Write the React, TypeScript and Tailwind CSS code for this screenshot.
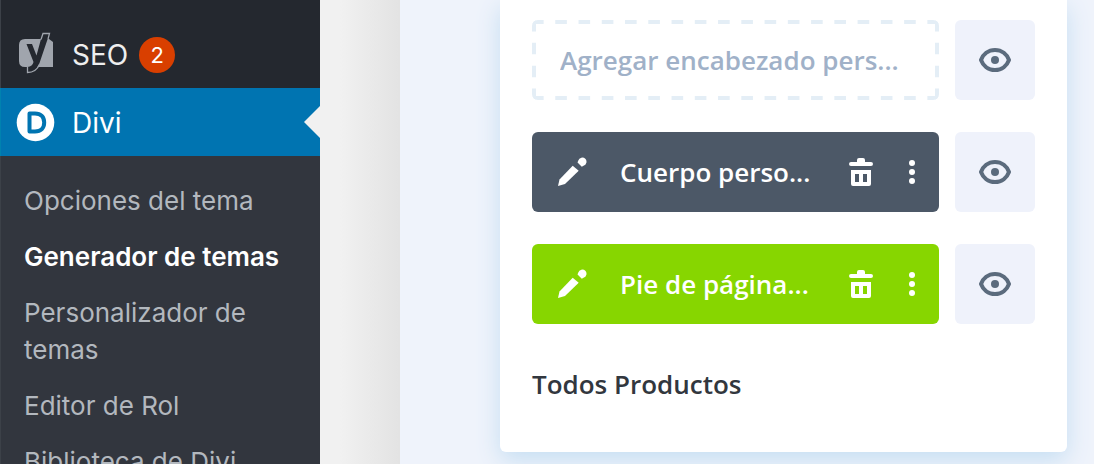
import { ReactNode } from 'react';

const submenu = [
  { label: 'Opciones del tema' },
  { label: 'Generador de temas', current: true },
  { label: 'Personalizador de temas' },
  { label: 'Editor de Rol' },
  { label: 'Biblioteca de Divi' },
];

export default function App() {
  return (
    <div className="flex h-screen overflow-hidden bg-[#f0f0f0] font-['Inter',sans-serif]">
      <Sidebar />
      <div className="w-20 shrink-0 bg-linear-to-r from-[#f1f1f1] from-25% to-[#e3e3e3]" />
      <main className="min-w-0 flex-1 bg-[#eff3fb] pr-[27px] pl-[100px] font-['Open_Sans',sans-serif]">
        <TemplateCard />
      </main>
    </div>
  );
}

function Sidebar() {
  return (
    <nav className="w-80 shrink-0 border-l border-[#3c4148] bg-[#24282f] pt-5">
      <a href="#seo" className="flex h-17 items-center pt-[2px] pl-[17px] text-[28px] text-[#eeeeee]">
        <YoastIcon />
        <span className="ml-4">SEO</span>
        <span className="ml-[11px] flex size-9 items-center justify-center rounded-full bg-[#d93f00] text-[22px] text-white">
          2
        </span>
      </a>
      <a
        href="#divi"
        className="-ml-px flex h-17 items-center border-l border-[#0082b0] bg-[#0074b1] pl-[15px] text-[28px] text-white"
      >
        <DiviIcon />
        <span className="ml-[17px] pt-[2px]">Divi</span>
        <svg className="ml-auto h-8 w-4" viewBox="0 0 16 32" aria-hidden="true">
          <path d="M16 0v32L0 16z" fill="#f1f1f1" />
        </svg>
      </a>
      <ul className="bg-[#32363e] pt-4 text-[26px]">
        {submenu.map((item) => (
          <li key={item.label}>
            <a
              href="#"
              aria-current={item.current ? 'page' : undefined}
              className={`block pt-[10px] pr-8 pb-[9px] pl-[23px] leading-[37px] ${
                item.current ? 'font-semibold text-white' : 'text-[#b3b8be]'
              }`}
            >
              {item.label}
            </a>
          </li>
        ))}
      </ul>
    </nav>
  );
}

function TemplateCard() {
  return (
    <section className="rounded-b-md bg-white px-8 pt-5 pb-12 shadow-[0_8px_24px_#c5def2]">
      <div className="flex flex-col gap-8">
        <Row>
          <button
            type="button"
            className="relative h-20 min-w-0 flex-1 overflow-hidden rounded-md px-7 text-left text-[26px] font-semibold text-[#a0b1c8]"
          >
            <DashedOutline />
            <span className="block truncate">Agregar encabezado pers...</span>
          </button>
        </Row>
        <Row>
          <Layout color="bg-[#4c5867]" label="Cuerpo perso..." />
        </Row>
        <Row>
          <Layout color="bg-[#87d600]" label="Pie de página..." />
        </Row>
      </div>
      <h2 className="mt-10 text-[26px] leading-10 font-semibold text-[#32373e]">Todos Productos</h2>
    </section>
  );
}

function Row({ children }: { children: ReactNode }) {
  return (
    <div className="flex gap-4">
      {children}
      <button
        type="button"
        aria-label="Mostrar"
        className="flex size-20 shrink-0 items-center justify-center rounded-md bg-[#eff2fb]"
      >
        <svg className="h-6 w-8" viewBox="0 0 32 24" aria-hidden="true">
          <path
            d="M2 12C4 6.500 9 2 16 2s12 4.500 14 10c-2 5.500-7 10-14 10S4 17.500 2 12z"
            fill="none"
            stroke="#5b6b7d"
            strokeWidth="4"
            strokeLinejoin="round"
          />
          <circle cx="16" cy="12" r="4" fill="#5b6b7d" />
        </svg>
      </button>
    </div>
  );
}

function Layout({ color, label }: { color: string; label: string }) {
  return (
    <div className={`flex h-20 min-w-0 flex-1 items-center rounded-md pr-5 pl-6 text-white ${color}`}>
      <button type="button" aria-label="Editar" className="shrink-0">
        <svg className="size-8" viewBox="0 0 32 32" fill="currentColor" aria-hidden="true">
          <path d="M2 30l1.500-6.500L16.700 9.700l6 5L9 28z" />
          <path d="M21.500 6.500l.8-2A4.200 4.200 0 1127.500 9.800l-1.700.9z" />
        </svg>
      </button>
      <span className="mx-8 min-w-0 flex-1 truncate text-[26px] font-semibold">{label}</span>
      <button type="button" aria-label="Eliminar" className="shrink-0">
        <svg className="h-7 w-6" viewBox="0 0 24 28" fill="currentColor" aria-hidden="true">
          <path d="M8 4V2q0-2 2-2h4q2 0 2 2v2h6a2 2 0 010 4H2a2 2 0 010-4z" />
          <path
            fillRule="evenodd"
            d="M2 12h20v14q0 2-2 2H4q-2 0-2-2zM6 16v8h4v-8zM14 16v8h4v-8z"
          />
        </svg>
      </button>
      <button type="button" aria-label="Más opciones" className="ml-8 shrink-0">
        <svg className="h-6 w-[14px]" viewBox="0 0 14 24" fill="currentColor" aria-hidden="true">
          <circle cx="7" cy="3" r="3" />
          <circle cx="7" cy="12" r="3" />
          <circle cx="7" cy="21" r="3" />
        </svg>
      </button>
    </div>
  );
}

// pathLength keeps a full dash at both ends of every side
function DashedOutline() {
  return (
    <svg
      className="absolute inset-0 size-full"
      stroke="#e4eef6"
      strokeWidth="8"
      strokeDasharray="1"
      aria-hidden="true"
    >
      <line x1="0" y1="0" x2="100%" y2="0" pathLength={35} />
      <line x1="0" y1="100%" x2="100%" y2="100%" pathLength={35} />
      <line x1="0" y1="0" x2="0" y2="100%" pathLength={7} />
      <line x1="100%" y1="0" x2="100%" y2="100%" pathLength={7} />
    </svg>
  );
}

function YoastIcon() {
  return (
    <svg className="mb-1 h-11 w-[38px]" viewBox="0 0 38 44" aria-hidden="true">
      <path d="M7 8h24l4 3v25H7q-6 0-6-6V14q0-6 6-6z" fill="#a0a5ad" />
      <path
        d="M8.500 13h5.500l4.500 11.500L24.500 2.500h7L21.500 32q-3.500 9.500-12 9.500V36q5-.5 6-5z"
        fill="#24282f"
      />
      <path d="M30 8l1.500-5.500h-6.500L23 8.500M9.500 36v5.500q8.500 0 12-8" fill="none" stroke="#a0a5ad" strokeWidth="1.300" />
    </svg>
  );
}

function DiviIcon() {
  return (
    <svg className="size-[39px]" viewBox="0 0 39 39" aria-hidden="true">
      <circle cx="19.500" cy="19.500" r="18.800" fill="#fff" />
      <path
        d="M13.500 10.500h5.500c6 0 9.200 3.500 9.200 9s-3.200 9-9.200 9h-5.500z"
        fill="none"
        stroke="#0074b1"
        strokeWidth="4"
        strokeLinejoin="round"
      />
    </svg>
  );
}
